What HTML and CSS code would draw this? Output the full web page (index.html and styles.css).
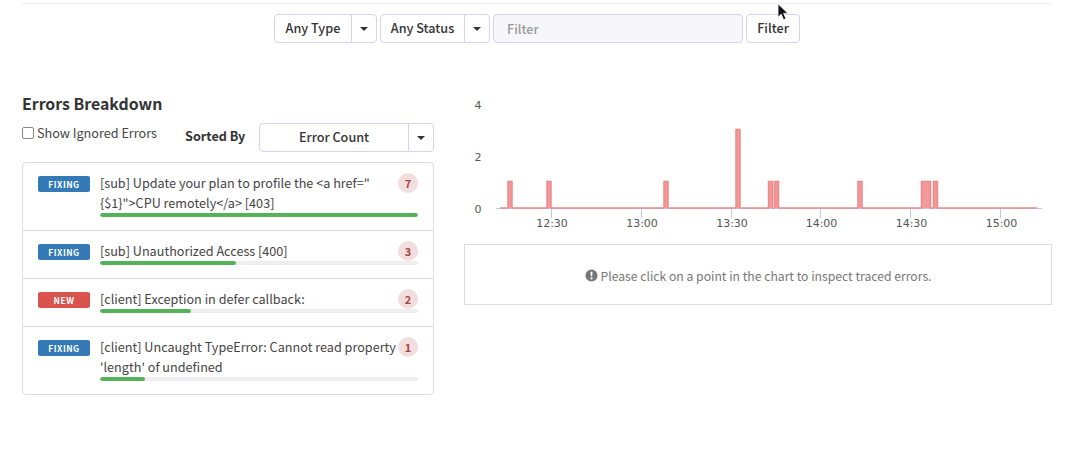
FILE: index.html
```html
<!DOCTYPE html>
<html lang="en">
<head>
<meta charset="utf-8">
<title>Errors Breakdown</title>
<link rel="stylesheet" href="styles.css">
</head>
<body>
<div class="page">
  <div class="rule"></div>
  <div class="toolbar">
    <div class="split">
      <button class="btn btn-type">Any Type</button>
      <button class="btn caret-btn"><span class="caret"></span></button>
    </div>
    <div class="split">
      <button class="btn btn-status">Any Status</button>
      <button class="btn caret-btn"><span class="caret"></span></button>
    </div>
    <input class="filter-input" type="text" placeholder="Filter">
    <button class="btn btn-filter">Filter</button>
  </div>
  <div class="columns">
    <section class="left">
      <h2 class="title">Errors Breakdown</h2>
      <div class="controls">
        <label class="ignored"><input class="check" type="checkbox">Show Ignored Errors</label>
        <span class="sorted">Sorted By</span>
        <div class="split">
          <button class="btn btn-sort">Error Count</button>
          <button class="btn caret-btn caret-sort"><span class="caret"></span></button>
        </div>
      </div>
      <div class="card">
        <div class="row">
          <span class="badge fixing">FIXING</span>
          <div class="main">
            <div class="line"><span class="msg">[sub] Update your plan to profile the &lt;a href="<br>{$1}"&gt;CPU remotely&lt;/a&gt; [403]</span><span class="count">7</span></div>
            <div class="progress"><div class="fill" style="width:100%"></div></div>
          </div>
        </div>
        <div class="row">
          <span class="badge fixing">FIXING</span>
          <div class="main">
            <div class="line"><span class="msg">[sub] Unauthorized Access [400]</span><span class="count">3</span></div>
            <div class="progress"><div class="fill" style="width:42.8%"></div></div>
          </div>
        </div>
        <div class="row">
          <span class="badge new">NEW</span>
          <div class="main">
            <div class="line"><span class="msg">[client] Exception in defer callback:</span><span class="count">2</span></div>
            <div class="progress"><div class="fill" style="width:28.6%"></div></div>
          </div>
        </div>
        <div class="row">
          <span class="badge fixing">FIXING</span>
          <div class="main">
            <div class="line"><span class="msg">[client] Uncaught TypeError: Cannot read property<br>'length' of undefined</span><span class="count">1</span></div>
            <div class="progress"><div class="fill" style="width:14.3%"></div></div>
          </div>
        </div>
      </div>
    </section>
    <section class="right">
      <svg class="chart" viewBox="464 94 588 142" width="588" height="142">
        <g class="axis">
          <path d="M496 208.5H1042"/>
          <path d="M551.5 208V218M641.5 208V218M731.5 208V218M820.5 208V218M910.5 208V218M1000.5 208V218"/>
        </g>
        <g class="bars">
          <path d="M500 208H508V181.5H512V208H547V181.5H551V208H664V181.5H668V208H736V129.5H740V208H768.5V181.5H772.5V208H774.5V181.5H778.5V208H858V181.5H862V208H921.5V181.5H930.5V208H933.5V181.5H937.5V208H1037"/>
        </g>
        <g class="labels">
          <text x="478" y="109" text-anchor="middle">4</text>
          <text x="478" y="161" text-anchor="middle">2</text>
          <text x="478" y="213" text-anchor="middle">0</text>
          <text x="552" y="227" text-anchor="middle">12:30</text>
          <text x="642" y="227" text-anchor="middle">13:00</text>
          <text x="732" y="227" text-anchor="middle">13:30</text>
          <text x="821.5" y="227" text-anchor="middle">14:00</text>
          <text x="911.5" y="227" text-anchor="middle">14:30</text>
          <text x="1001.5" y="227" text-anchor="middle">15:00</text>
        </g>
      </svg>
      <div class="notice">
        <svg class="notice-icon" viewBox="0 0 14 14" width="13" height="13"><path fill-rule="evenodd" d="M7 0.5a6.5 6.5 0 1 0 0 13a6.5 6.5 0 1 0 0-13ZM5.9 3h2.2l-0.3 4.9H6.2ZM7 8.9a1.2 1.2 0 1 1 0 2.4a1.2 1.2 0 1 1 0-2.4Z"/></svg>
        <span>Please click on a point in the chart to inspect traced errors.</span>
      </div>
    </section>
  </div>
</div>
<svg class="cursor" viewBox="0 0 12 18" width="12" height="18"><path d="M1 0.8V14.2L4.2 11.2L6.6 16.8L9 15.7L6.6 10.4H11Z"/></svg>
</body>
</html>
```
FILE: styles.css
```css
* { box-sizing: border-box; }
html, body { margin: 0; padding: 0; background: #fff; }
body {
  width: 1068px;
  height: 450px;
  overflow: hidden;
  position: relative;
  font-family: "Noto Sans CJK SC", "Noto Sans", sans-serif;
  font-size: 12.65px;
  line-height: 20px;
  color: #333;
}
.page { padding: 3px 16px 0 22px; }
.rule { height: 1px; background: #eeeef6; }
.toolbar {
  display: flex;
  justify-content: center;
  gap: 3px;
  margin-top: 10px;
  height: 29px;
}
.split { display: flex; }
.btn {
  height: 29px;
  padding: 0 0 2px;
  border: 1px solid #d6d2f5;
  border-radius: 4px;
  background: #fff;
  color: #333;
  font: 500 12.65px/20px "Noto Sans CJK SC", "Noto Sans", sans-serif;
}
.btn-type { width: 78px; border-radius: 4px 0 0 4px; }
.btn-status { width: 85px; border-radius: 4px 0 0 4px; }
.caret-btn {
  width: 26px;
  margin-left: -1px;
  padding: 0;
  border-radius: 0 4px 4px 0;
  display: flex;
  align-items: center;
  justify-content: center;
}
.caret {
  width: 0;
  height: 0;
  border-left: 4px solid transparent;
  border-right: 4px solid transparent;
  border-top: 4px solid #333;
}
.filter-input {
  width: 250px;
  height: 29px;
  padding: 0 13px;
  border: 1px solid #d6d2f5;
  border-radius: 4px;
  background: #f7f7fb;
  font: 500 12.65px/20px "Noto Sans CJK SC", "Noto Sans", sans-serif;
}
.filter-input::placeholder { color: #999; opacity: 1; }
.btn-filter { width: 54px; }
.columns { display: flex; gap: 30px; margin-top: 51px; }
.left { width: 412px; }
.title { margin: 0; font-size: 15.85px; line-height: 20px; font-weight: 700; color: #333; }
.controls { display: flex; align-items: flex-start; margin-top: 9px; height: 39px; }
.ignored { display: flex; align-items: center; width: 163px; height: 19px; color: #444; }
.check {
  appearance: none;
  width: 12px;
  height: 12px;
  margin: 0 3px 0 0;
  border: 1px solid #8a8a8a;
  border-radius: 2px;
  background: #fff;
}
.sorted { width: 74px; margin-top: 3px; font-weight: 700; }
.btn-sort { width: 150px; border-radius: 4px 0 0 4px; }
.caret-sort { width: 26px; }
.card {
  border: 1px solid #ddd;
  border-radius: 4px;
  width: 412px;
}
.row {
  display: flex;
  padding: 10px 15px 13px;
  border-bottom: 1px solid #ddd;
}
.row:last-child { border-bottom: 0; }
.badge {
  flex: none;
  width: 52px;
  height: 16px;
  margin: 3px 10px 0 0;
  border-radius: 2px;
  color: #fff;
  font-size: 8.5px;
  line-height: 16px;
  font-weight: 700;
  letter-spacing: 0.5px;
  text-align: center;
}
.fixing { background: #337ab7; }
.new { background: #d9534f; }
.main { flex: 1; }
.line { display: flex; justify-content: space-between; align-items: flex-start; }
.msg { color: #444; }
.count {
  flex: none;
  width: 20px;
  height: 20px;
  border-radius: 50%;
  background: #f2dede;
  color: #a94442;
  font-size: 11px;
  line-height: 20px;
  font-weight: 700;
  text-align: center;
}
.progress { height: 4px; border-radius: 2px; background: #efedf2; overflow: hidden; }
.fill { height: 100%; border-radius: 2px; background: #55b15a; }
.right { width: 588px; }
.chart { display: block; margin-bottom: 8px; }
.axis path { fill: none; stroke: #b9cfe0; stroke-width: 1; }
.bars path { fill: rgba(240, 128, 128, 0.8); stroke: #ee8a8a; stroke-width: 1.5; }
.labels text { font: 11px "DejaVu Sans", sans-serif; fill: #555; }
.notice {
  display: flex;
  align-items: center;
  justify-content: center;
  gap: 3px;
  height: 61px;
  padding-top: 2px;
  border: 1px solid #ddd;
  color: #777;
  font-size: 12.2px;
}
.notice-icon { fill: #777; }
.cursor { position: absolute; left: 777px; top: 3px; }
.cursor path { fill: #111; stroke: #fff; stroke-width: 0.8; }
```
